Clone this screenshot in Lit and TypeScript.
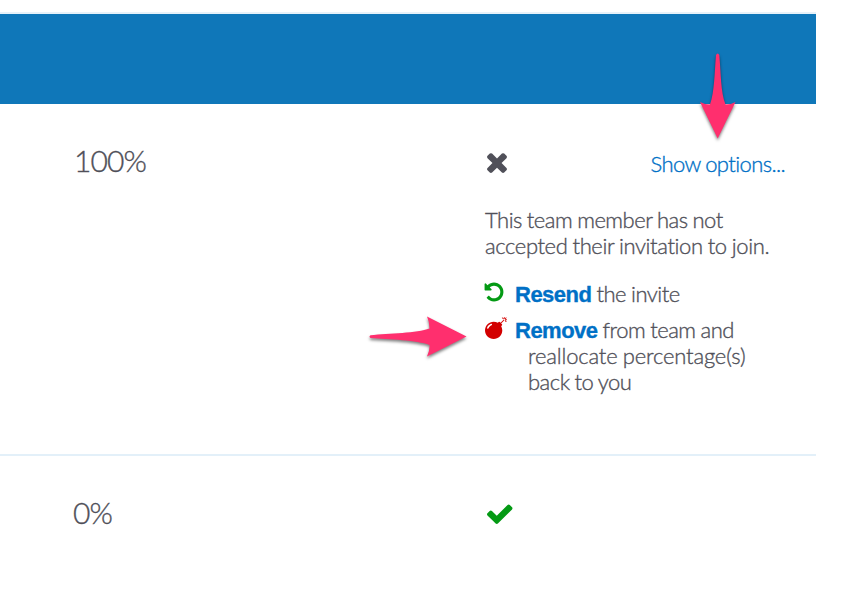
import { LitElement, html, css, svg } from "lit";
import { customElement, property } from "lit/decorators.js";

const ICONS: Record<string, string> = {
  times:
    "M1490 1322q0 40-28 68l-136 136q-28 28-68 28t-68-28l-294-294-294 294q-28 28-68 28t-68-28l-136-136q-28-28-28-68t28-68l294-294-294-294q-28-28-28-68t28-68l136-136q28-28 68-28t68 28l294 294 294-294q28-28 68-28t68 28l136 136q28 28 28 68t-28 68l-294 294 294 294q28 28 28 68z",
  check:
    "M1671 566q0 40-28 68l-724 724-136 136q-28 28-68 28t-68-28l-136-136-362-362q-28-28-28-68t28-68l136-136q28-28 68-28t68 28l294 295 656-657q28-28 68-28t68 28l136 136q28 28 28 68z",
  undo:
    "M1664 896q0 156-61 298t-164 245-245 164-298 61q-172 0-327-72.5t-264-204.5q-7-10-6.5-22.5t8.5-20.5l137-138q10-9 25-9 16 2 23 12 73 95 179 147t225 52q104 0 198.5-40.5t163.5-109.5 109.5-163.5 40.5-198.5-40.5-198.5-109.5-163.5-163.5-109.5-198.5-40.5q-98 0-188 35.5t-160 101.5l137 138q31 30 14 69-17 40-59 40h-448q-26 0-45-19t-19-45v-448q0-42 40-59 39-17 69 14l130 129q107-101 244.5-156.5t284.5-55.5q156 0 298 61t245 164 164 245 61 298z",
  bomb:
    "M571 589q-10-25-34-35t-49 0q-108 44-191 127t-127 191q-10 25 0 49t35 34q13 5 24 5 42 0 60-40 34-84 98.5-148.5t148.5-98.5q25-11 35-35t0-49zm942-356l46 46-244 243 68 68q19 19 19 45.5t-19 45.5l-64 64q89 161 89 343 0 143-55.5 273.5t-150 225-225 150-273.5 55.5-273.5-55.5-225-150-150-225-55.5-273.5 55.5-273.5 150-225 225-150 273.5-55.5q182 0 343 89l64-64q19-19 45.5-19t45.5 19l68 68zm8-56q-10 10-22 10-13 0-23-10l-91-90q-9-10-9-23t9-23q10-9 23-9t23 9l90 91q10 9 10 22.5t-10 22.5zm230 230q-11 9-23 9t-23-9l-90-91q-10-9-10-22.5t10-22.5q9-10 22.5-10t22.5 10l91 90q9 10 9 23t-9 23zm41-183q0 14-9 23t-23 9h-96q-14 0-23-9t-9-23 9-23 23-9h96q14 0 23 9t9 23zm-192-192v96q0 14-9 23t-23 9-23-9-9-23v-96q0-14 9-23t23-9 23 9 9 23zm151 55l-91 90q-10 10-22 10-13 0-23-10-10-9-10-22.5t10-22.5l90-91q10-9 23-9t23 9q9 10 9 23t-9 23z",
};

@customElement("fa-icon")
class FaIcon extends LitElement {
  static styles = css`
    :host { display: block; width: 1em; height: 1em; flex: none; }
    .glyph { display: block; width: 100%; height: 100%; fill: currentColor; overflow: visible; }
  `;
  @property() name = "times";
  render() {
    return html`<svg class="glyph" viewBox="0 0 1792 1792">${svg`<path d=${ICONS[this.name]}></path>`}</svg>`;
  }
}

@customElement("app-root")
class AppRoot extends LitElement {
  static styles = css`
    :host {
      display: block;
      position: relative;
      width: 844px;
      height: 590px;
      overflow: hidden;
      background: #fff;
      color: #505059;
      font: 300 22px/26px Lato, sans-serif;
      font-variant-ligatures: none;
      letter-spacing: -0.5px;
      word-spacing: -0.5px;
      -webkit-text-stroke: 0.35px currentColor;
    }
    .table { width: 816px; padding-top: 12px; }
    .banner { height: 90px; border-top: 2px solid #e6f1f9; background: #0f77b9; }
    .row { display: grid; grid-template-columns: 485px 300px; box-sizing: border-box; }
    .pending { height: 352px; padding-top: 42px; border-bottom: 2px solid #e3f0f9; }
    .joined { padding-top: 42px; }
    .share { font-size: 30px; line-height: 32px; margin-top: -2px; padding-left: 74px; letter-spacing: -0.9px; }
    .joined .share { padding-left: 73px; }
    .status { display: flex; justify-content: space-between; height: 32px; }
    .mark { font-size: 30px; }
    .cross { margin: 1px 0 0 -3px; }
    .tick { font-size: 29.5px; color: #049a14; margin: 0.5px 0 0; }
    .link { color: #0070c6; text-decoration: none; }
    .toggle { margin-top: 5px; letter-spacing: -0.6px; }
    .note { margin: 29px 0 0; white-space: nowrap; }
    .invitation { letter-spacing: -0.39px; }
    .actions { margin: 22px 0 0; padding: 0; list-style: none; }
    .action { display: flex; margin-bottom: 10px; white-space: nowrap; }
    .action-icon { font-size: 22px; width: 30px; flex: none; }
    .undo { color: #049a14; margin: 0 2px 0 -2px; }
    .bomb { color: #d30000; margin: 0 0.5px 0 -0.5px; }
    .hang { padding-left: 13px; text-indent: -13px; }
    .wide { letter-spacing: -0.17px; }
    .strong { font: 700 22px/20px "Liberation Sans", Arial, sans-serif; letter-spacing: -0.5px; }
    .arrow { position: absolute; overflow: visible; fill: #ff2f6e; filter: drop-shadow(0 2px 1.5px rgba(0, 0, 0, 0.5)); }
    .down { left: 700px; top: 53px; }
    .right { left: 369px; top: 316px; }
  `;

  render() {
    return html`
      <div class="table">
        <div class="banner"></div>
        <div class="row pending">
          <div class="share">100%</div>
          <div>
            <div class="status">
              <fa-icon class="mark cross" name="times"></fa-icon>
              <a class="link toggle">Show options...</a>
            </div>
            <p class="note">This team member has not<br /><span class="invitation">accepted their invitation to join.</span></p>
            <ul class="actions">
              <li class="action">
                <span class="action-icon undo"><fa-icon name="undo"></fa-icon></span>
                <span><a class="link strong">Resend</a> the invite</span>
              </li>
              <li class="action">
                <span class="action-icon bomb"><fa-icon name="bomb"></fa-icon></span>
                <span class="hang"><a class="link strong">Remove</a> from team and<br /><span class="wide">reallocate percentage(s)</span><br />back to you</span>
              </li>
            </ul>
          </div>
        </div>
        <div class="row joined">
          <div class="share">0%</div>
          <div class="status"><fa-icon class="mark tick" name="check"></fa-icon></div>
        </div>
      </div>
      <svg class="arrow down" width="36" height="86" viewBox="0 0 36 86">
        <path d="M16 2Q17.7-1 19.300 2C21 20 20.500 39 25.500 51.500Q31 51.500 35.500 49L17.700 85.500L0 49Q5 51.500 10 51.500C14.500 39 14.500 20 16 2Z"></path>
      </svg>
      <svg class="arrow right" width="98" height="41" viewBox="0 0 98 41">
        <path d="M1.500 19.200C20 17.500 48 17 60.500 12.500Q60.500 6 58 .5L97.500 20.500L58 40.500Q61 34 60.500 29C48 24 20 23.500 1.500 22Q-.5 20.500 1.500 19.200Z"></path>
      </svg>
    `;
  }
}
